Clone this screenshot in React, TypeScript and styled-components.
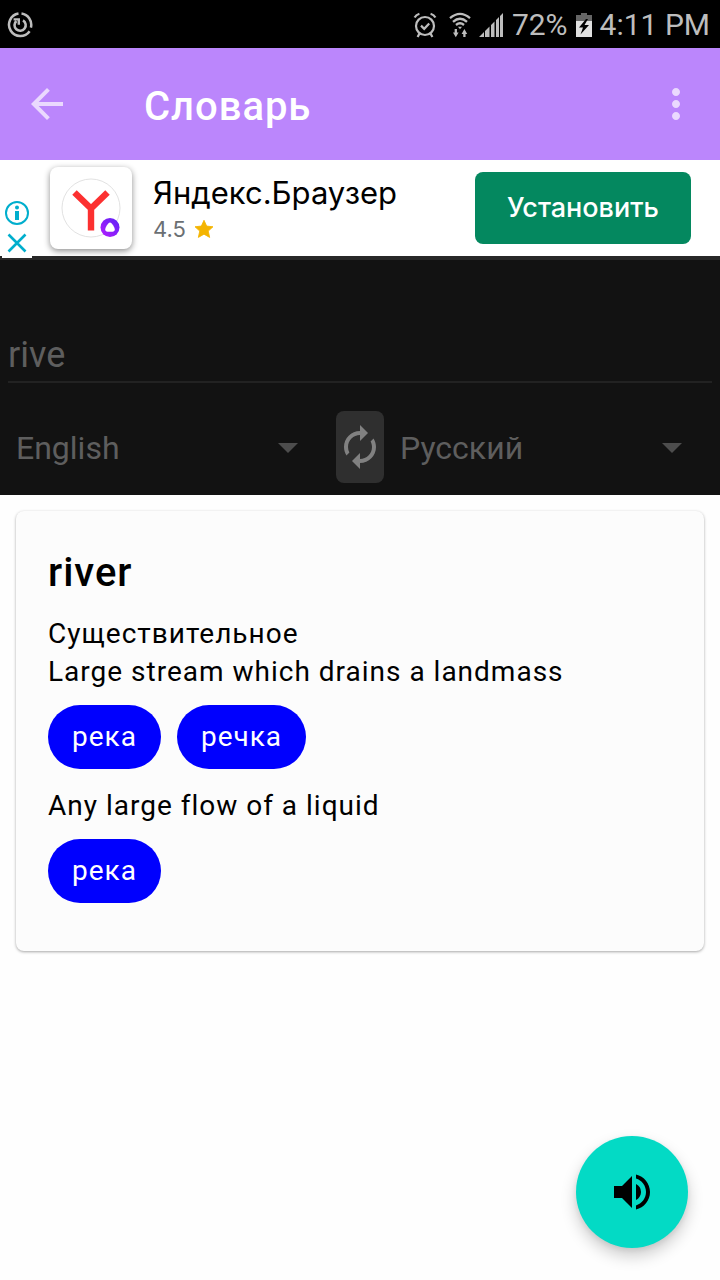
import React, { useState } from "react";
import styled, { createGlobalStyle } from "styled-components";
import { MdArrowBack, MdAutorenew, MdMoreVert, MdVolumeUp } from "react-icons/md";

const GlobalStyle = createGlobalStyle`
  *, *::before, *::after { box-sizing: border-box; }
  body {
    margin: 0;
    background: #fefefe;
    color: #000;
    font-family: Roboto, "Noto Sans", sans-serif;
  }
  button, input, select { font: inherit; color: inherit; }
  svg { display: block; flex: none; }
`;

const Screen = styled.div`
  display: flex;
  flex-direction: column;
  min-height: 100vh;
`;

const StatusBar = styled.div`
  display: flex;
  align-items: center;
  justify-content: space-between;
  height: 48px;
  padding: 2px 10px 0 7px;
  background: #000;
  color: #bdbdbd;
  font-size: 30px;
  line-height: 46px;
`;

const StatusGroup = styled.div`
  display: flex;
  align-items: center;
  gap: 8px;
`;

const StatusIcons = styled.div`
  display: flex;
  align-items: center;
  gap: 12px;
`;

const AppBar = styled.header`
  display: flex;
  align-items: center;
  height: 112px;
  padding: 0 20px 0 23px;
  background: #bb86fc;
`;

const BarButton = styled.button`
  display: flex;
  padding: 0;
  border: 0;
  background: none;
  color: #ead9fe;
  cursor: pointer;
`;

const Title = styled.h1`
  flex: 1;
  margin: 0;
  padding: 6px 0 0 73px;
  color: #fff;
  font-size: 40px;
  font-weight: 500;
  line-height: 48px;
  letter-spacing: 1px;
`;

const AdBanner = styled.aside`
  position: relative;
  z-index: 1;
  display: flex;
  align-items: center;
  height: 96px;
  padding: 0 29px 0 50px;
  background: #fff;
  font-family: Inter, "Open Sans", sans-serif;
`;

const AdChoices = styled.div`
  position: absolute;
  left: 2px;
  top: 40px;
  display: flex;
  flex-direction: column;
  align-items: center;
  gap: 4px;
  width: 30px;
  height: 58px;
  background: #fff;
`;

const AdChoiceButton = styled.button`
  display: flex;
  padding: 0;
  border: 0;
  background: none;
  color: #00aecd;
  cursor: pointer;
`;

const AdLogo = styled.div`
  display: flex;
  align-items: center;
  justify-content: center;
  width: 82px;
  height: 82px;
  border-radius: 8px;
  background: #fff;
  box-shadow: 0 2px 6px rgba(0, 0, 0, 0.45);
`;

const AdText = styled.div`
  flex: 1;
  padding: 2px 0 0 21px;
`;

const AdName = styled.div`
  font-size: 31px;
  line-height: 40px;
`;

const AdRating = styled.div`
  display: flex;
  align-items: center;
  gap: 8px;
  color: #6b6f73;
  font-size: 22px;
  line-height: 32px;
`;

const InstallButton = styled.button`
  width: 216px;
  height: 72px;
  padding: 0 0 2px;
  border: 0;
  border-radius: 8px;
  background: #04885f;
  color: #fff;
  font-size: 27px;
  font-weight: 500;
  cursor: pointer;
`;

const SearchPanel = styled.section`
  padding: 64px 0 12px;
  border-top: 4px solid #282828;
  background: #121212;
  color: #5e5e5e;
`;

const WordField = styled.label`
  display: block;
  padding: 0 8px;
`;

const WordInput = styled.input`
  display: block;
  width: 100%;
  height: 59px;
  padding: 4px 0 0;
  border: 0;
  border-bottom: 2px solid #222;
  outline: 0;
  background: none;
  font-size: 36px;
`;

const LanguageRow = styled.div`
  display: flex;
  align-items: center;
  margin-top: 28px;
`;

const LanguageField = styled.div`
  position: relative;
  flex: 1;
`;

const LanguageSelect = styled.select`
  display: block;
  width: 100%;
  height: 72px;
  padding: 2px 64px 0 16px;
  border: 0;
  outline: 0;
  appearance: none;
  background: none;
  font-size: 32px;
`;

const SelectArrow = styled.svg`
  position: absolute;
  right: 38px;
  top: 32px;
  pointer-events: none;
`;

const SwapButton = styled.button`
  display: flex;
  align-items: center;
  justify-content: center;
  width: 48px;
  height: 72px;
  padding: 0;
  border: 0;
  border-radius: 8px;
  background: #2f2f2f;
  color: #818181;
  cursor: pointer;
`;

const Results = styled.main`
  flex: 1;
  padding: 16px;
`;

const Card = styled.article`
  padding: 32px 32px 48px;
  border-radius: 8px;
  background: #fcfcfc;
  box-shadow: 0 1px 3px rgba(0, 0, 0, 0.35);
`;

const Word = styled.h2`
  margin: 0 0 12px;
  font-size: 40px;
  font-weight: 500;
  line-height: 60px;
  letter-spacing: 1px;
`;

const Line = styled.p`
  margin: 0;
  font-size: 28px;
  line-height: 38px;
  letter-spacing: 1px;
`;

const Meaning = styled.div`
  & + & {
    margin-top: 18px;
  }
`;

const Chips = styled.div`
  display: flex;
  flex-wrap: wrap;
  gap: 16px;
  margin-top: 14px;
`;

const Chip = styled.button`
  height: 64px;
  padding: 0 24px 2px;
  border: 0;
  border-radius: 32px;
  background: #0000fe;
  color: #fff;
  font-size: 28px;
  letter-spacing: 1px;
  cursor: pointer;
`;

const SpeakButton = styled.button`
  position: fixed;
  right: 32px;
  bottom: 32px;
  display: flex;
  align-items: center;
  justify-content: center;
  width: 112px;
  height: 112px;
  padding: 0;
  border: 0;
  border-radius: 50%;
  background: #03dac5;
  color: #000;
  box-shadow: 0 8px 16px rgba(0, 0, 0, 0.2), 0 2px 6px rgba(0, 0, 0, 0.08);
  cursor: pointer;
`;

const SyncIcon = () => (
  <svg width="26" height="26" viewBox="0 0 26 26" fill="none" stroke="currentColor">
    <path d="M11.5 1.6A11.3 11.3 0 1 0 22.6 19.2" strokeWidth="2.5" />
    <path d="M14.5 1.6A11.3 11.3 0 0 1 23.9 15.6" strokeWidth="2.5" />
    <path d="M16 8.4A5.6 5.6 0 1 1 9.4 9" strokeWidth="2.6" />
    <path d="M6.6 7.4h5.2v5.4" strokeWidth="2.4" />
  </svg>
);

const AlarmIcon = () => (
  <svg width="24" height="26" viewBox="0 0 24 26" fill="none" stroke="currentColor" strokeWidth="2.2">
    <circle cx="12" cy="14" r="9" />
    <path d="M8 13.6l3.2 3.2 5-5.4M1.6 5.6Q3 2.8 6.4 1.8M22.4 5.6Q21 2.8 17.6 1.8M6.6 21.4L4.6 25M17.4 21.4l2 3.6" />
  </svg>
);

const WifiIcon = () => (
  <svg width="22" height="26" viewBox="0 0 22 26" fill="none" stroke="currentColor" strokeWidth="2.3">
    <path d="M1 6.2Q11 -2.4 21 6.2M4 9.8Q11 3.6 18 9.8M7 13Q11 9.6 15 13" />
    <path d="M9 14.8h4l-2 2.4z" fill="currentColor" stroke="none" />
    <path d="M4 20.4h5.6L6.8 25.2zM12.6 22h5.6L15.4 17z" fill="currentColor" stroke="none" />
    <path d="M6.8 17v5M15.4 20v5" />
  </svg>
);

const SignalIcon = () => (
  <svg width="25" height="25" viewBox="0 0 25 25" fill="currentColor">
    <path d="M0 24l5-5v5zM6 18l4.5-4.5V24H6zM12 12l3.5-3.5V24H12zM17 7l3-3v20h-3zM21 3l3-3v24h-3z" />
  </svg>
);

const BatteryIcon = () => (
  <svg width="16" height="24" viewBox="0 0 16 24">
    <path d="M5 0h6v2h5v6H0V2h5z" fill="#666" />
    <path d="M0 8h16v16H0z" fill="#e0e0e0" />
    <path d="M10 6L3 14.5h4L4.5 21.5l8.5-9.5H8.5L12 6z" fill="#000" />
  </svg>
);

const InfoIcon = () => (
  <svg width="26" height="26" viewBox="0 0 26 26">
    <circle cx="13" cy="13" r="11" fill="none" stroke="currentColor" strokeWidth="2" />
    <circle cx="13" cy="7.5" r="2" fill="currentColor" />
    <path d="M11 11h4v9h-4z" fill="currentColor" />
  </svg>
);

const CloseIcon = () => (
  <svg width="26" height="26" viewBox="0 0 26 26" stroke="currentColor" strokeWidth="2.6">
    <path d="M4.5 4.5l17 17M21.5 4.5l-17 17" />
  </svg>
);

const BrowserLogo = () => (
  <svg width="62" height="62" viewBox="0 0 62 62">
    <defs>
      <linearGradient id="badge" x1="0" y1="1" x2="1" y2="0">
        <stop offset="0" stopColor="#b51cff" />
        <stop offset="1" stopColor="#5a22f5" />
      </linearGradient>
    </defs>
    <circle cx="31" cy="31" r="29" fill="#fff" stroke="#e2e2e2" />
    <path
      d="M14.5 15.5L31 31.5l16.500-16M31 30v23.5"
      fill="none"
      stroke="#fc3030"
      strokeWidth="6.4"
      strokeLinejoin="round"
    />
    <circle cx="50" cy="50.5" r="9.5" fill="url(#badge)" />
    <path d="M50 45.4c1.800 0 4.800 5 4.800 7s-2.400 2.400-4.800 2.400-4.800-.4-4.800-2.400 3-7 4.800-7z" fill="#fff" />
  </svg>
);

const StarIcon = () => (
  <svg width="20" height="20" viewBox="0 0 24 24">
    <path
      d="M12 1.5l3.2 7 7.6.8-5.7 5.2 1.7 7.6L12 18.2l-6.8 3.9 1.7-7.6L1.2 9.3l7.6-.8z"
      fill="#f4b400"
      stroke="#f4b400"
      strokeLinejoin="round"
    />
  </svg>
);

const meanings = [
  { text: "Large stream which drains a landmass", translations: ["река", "речка"] },
  { text: "Any large flow of a liquid", translations: ["река"] },
];

const languages = ["English", "Русский"];

type LanguagePickerProps = {
  label: string;
  value: string;
  onChange: (value: string) => void;
};

const LanguagePicker = ({ label, value, onChange }: LanguagePickerProps) => (
  <LanguageField>
    <LanguageSelect aria-label={label} value={value} onChange={(e) => onChange(e.target.value)}>
      {languages.map((name) => (
        <option key={name}>{name}</option>
      ))}
    </LanguageSelect>
    <SelectArrow width="20" height="10" viewBox="0 0 20 10" fill="#4d4d4d">
      <path d="M0 0h20L10 10z" />
    </SelectArrow>
  </LanguageField>
);

export default function App() {
  const [query, setQuery] = useState("rive");
  const [from, setFrom] = useState("English");
  const [to, setTo] = useState("Русский");

  const swap = () => {
    setFrom(to);
    setTo(from);
  };

  return (
    <Screen>
      <GlobalStyle />
      <StatusBar>
        <SyncIcon />
        <StatusGroup>
          <StatusIcons>
            <AlarmIcon />
            <WifiIcon />
          </StatusIcons>
          <SignalIcon />
          <span>72%</span>
          <BatteryIcon />
          <span>4:11 PM</span>
        </StatusGroup>
      </StatusBar>
      <AppBar>
        <BarButton aria-label="Назад">
          <MdArrowBack size={48} />
        </BarButton>
        <Title>Словарь</Title>
        <BarButton aria-label="Меню">
          <MdMoreVert size={48} />
        </BarButton>
      </AppBar>
      <AdBanner>
        <AdChoices>
          <AdChoiceButton aria-label="Об объявлении">
            <InfoIcon />
          </AdChoiceButton>
          <AdChoiceButton aria-label="Закрыть">
            <CloseIcon />
          </AdChoiceButton>
        </AdChoices>
        <AdLogo>
          <BrowserLogo />
        </AdLogo>
        <AdText>
          <AdName>Яндекс.Браузер</AdName>
          <AdRating>
            4.5
            <StarIcon />
          </AdRating>
        </AdText>
        <InstallButton>Установить</InstallButton>
      </AdBanner>
      <SearchPanel>
        <WordField>
          <WordInput aria-label="Слово" value={query} onChange={(e) => setQuery(e.target.value)} />
        </WordField>
        <LanguageRow>
          <LanguagePicker label="Исходный язык" value={from} onChange={setFrom} />
          <SwapButton aria-label="Поменять языки" onClick={swap}>
            <MdAutorenew size={48} />
          </SwapButton>
          <LanguagePicker label="Язык перевода" value={to} onChange={setTo} />
        </LanguageRow>
      </SearchPanel>
      <Results>
        <Card>
          <Word>river</Word>
          <Line>Существительное</Line>
          {meanings.map((meaning) => (
            <Meaning key={meaning.text}>
              <Line>{meaning.text}</Line>
              <Chips>
                {meaning.translations.map((translation) => (
                  <Chip key={translation}>{translation}</Chip>
                ))}
              </Chips>
            </Meaning>
          ))}
        </Card>
      </Results>
      <SpeakButton aria-label="Произнести">
        <MdVolumeUp size={48} />
      </SpeakButton>
    </Screen>
  );
}
